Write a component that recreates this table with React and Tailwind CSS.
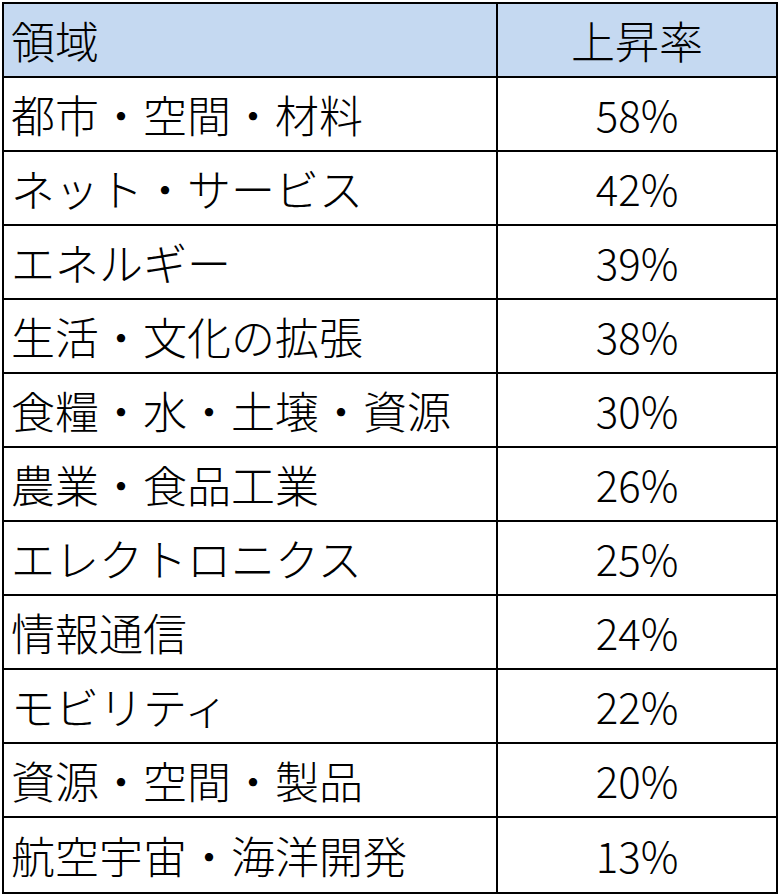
const rows = [
  { area: "都市・空間・材料", rate: "58%" },
  { area: "ネット・サービス", rate: "42%" },
  { area: "エネルギー", rate: "39%" },
  { area: "生活・文化の拡張", rate: "38%" },
  { area: "食糧・水・土壌・資源", rate: "30%" },
  { area: "農業・食品工業", rate: "26%" },
  { area: "エレクトロニクス", rate: "25%" },
  { area: "情報通信", rate: "24%" },
  { area: "モビリティ", rate: "22%" },
  { area: "資源・空間・製品", rate: "20%" },
  { area: "航空宇宙・海洋開発", rate: "13%" }
];

export default function App() {
  return (
    <div className="w-[780px] h-[894px] bg-white pt-[2px] pl-[2px]" style={{ fontFamily: '"Noto Sans CJK JP", "Noto Sans", sans-serif' }}>
      <div className="w-[776px] border-2 border-black leading-none text-black font-light">
        {/* header */}
        <div className="grid grid-cols-[494px_1fr] h-[74px] border-b-2 border-black bg-[#c5d9f1] text-[44px]">
          <div className="flex items-center pl-[7px] border-r-2 border-black">領域</div>
          <div className="flex items-center justify-center">上昇率</div>
        </div>

        {rows.map((row, i) => (
          <div
            key={i}
            className={`grid grid-cols-[494px_1fr] h-[74px] ${i < rows.length - 1 ? "border-b-2 border-black" : ""}`}
          >
            <div className="flex items-center pl-[7px] border-r-2 border-black whitespace-nowrap text-[44px]">{row.area}</div>
            <div className="flex items-center justify-center text-[42px]">{row.rate}</div>
          </div>
        ))}
      </div>
    </div>
  );
}
